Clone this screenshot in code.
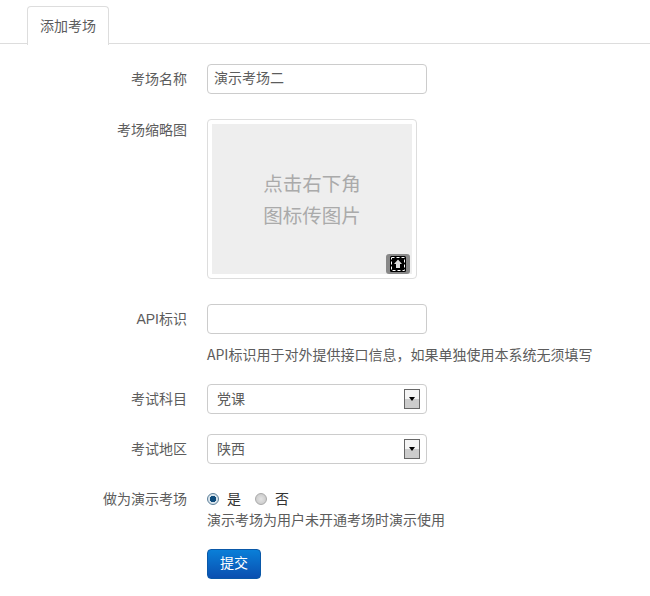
<div class="page">
  <div class="tabs">
    <div class="tab">添加考场</div>
  </div>
  <form class="form">
    <div class="row r-name">
      <div class="label">考场名称</div>
      <div class="input">演示考场二</div>
    </div>
    <div class="row r-thumb">
      <div class="label">考场缩略图</div>
      <div class="thumb">
        <div class="thumb-inner">
          <div class="thumb-text">点击右下角<br />图标传图片</div>
          <div class="upload">
            <svg width="16" height="16" viewBox="0 0 16 16">
              <rect x="0" y="0" width="16" height="16" rx="1.5" fill="#000" />
              <rect x="1.5" y="1.5" width="13" height="13" fill="none" stroke="#fff" stroke-width="1" stroke-dasharray="3 2" />
              <path d="M8 3.5 L12 8 H10 V12 H6 V8 H4 Z" fill="#ddd" />
            </svg>
          </div>
        </div>
      </div>
    </div>
    <div class="row r-api">
      <div class="label api">API标识</div>
      <div class="col">
        <div class="input"></div>
        <div class="help h1">API标识用于对外提供接口信息，如果单独使用本系统无须填写</div>
      </div>
    </div>
    <div class="row r-sel1">
      <div class="label">考试科目</div>
      <div class="select">
        <span>党课</span>
        <span class="arrow"><i></i></span>
      </div>
    </div>
    <div class="row r-sel2">
      <div class="label">考试地区</div>
      <div class="select">
        <span>陕西</span>
        <span class="arrow"><i></i></span>
      </div>
    </div>
    <div class="row r-demo">
      <div class="label">做为演示考场</div>
      <div class="col">
        <div class="radios">
          <span class="radio on"></span><span class="rtext">是</span>
          <span class="radio off"></span><span class="rtext">否</span>
        </div>
        <div class="help h2">演示考场为用户未开通考场时演示使用</div>
      </div>
    </div>
    <div class="row r-btn">
      <div class="label"></div>
      <div class="btn">提交</div>
    </div>
  </form>
</div>

<style>
  :global(body) {
    margin: 0;
    background: #fff;
  }
  .page {
    width: 650px;
    height: 596px;
    overflow: hidden;
    font-family: "Noto Sans CJK SC", "Liberation Sans", sans-serif;
    font-size: 14px;
    color: #5c5c5c;
    padding-top: 6px;
    box-sizing: border-box;
  }
  .tabs {
    height: 37px;
    border-bottom: 1px solid #ddd;
    padding-left: 27px;
  }
  .tab {
    width: 80px;
    height: 38px;
    line-height: 37px;
    text-align: center;
    border: 1px solid #ddd;
    border-bottom: none;
    border-radius: 4px 4px 0 0;
    background: #fff;
  }
  .form {
    display: flex;
    flex-direction: column;
    padding-top: 20px;
  }
  .row {
    display: grid;
    grid-template-columns: 187px 1fr;
    column-gap: 20px;
  }
  .label {
    text-align: right;
    line-height: 30px;
    margin-top: -1px;
  }
  .api {
    font-family: "Liberation Sans", "Noto Sans CJK SC", sans-serif;
    line-height: 16px;
    padding-top: 8px;
  }
  .input {
    width: 220px;
    height: 30px;
    box-sizing: border-box;
    border: 1px solid #ccc;
    border-radius: 4px;
    padding: 0 6px;
    line-height: 25px;
    background: #fff;
  }
  .r-thumb { margin-top: 25px; }
  .r-thumb .label { line-height: 22px; }
  .thumb {
    width: 210px;
    height: 160px;
    box-sizing: border-box;
    border: 1px solid #ddd;
    border-radius: 4px;
    padding: 4px;
  }
  .thumb-inner {
    position: relative;
    width: 200px;
    height: 150px;
    margin: 0 auto;
    background: #eee;
    text-align: center;
  }
  .thumb-text {
    padding-top: 43px;
    font-size: 19.5px;
    line-height: 32px;
    color: #aaa;
  }
  .upload {
    position: absolute;
    right: 2px;
    bottom: 0;
    width: 24px;
    height: 20px;
    background: #888;
    border-radius: 3px;
    display: flex;
    align-items: center;
    justify-content: center;
  }
  .r-api { margin-top: 25px; }
  .h1 {
    margin-top: 10px;
    line-height: 20px;
  }
  .select {
    width: 220px;
    height: 30px;
    box-sizing: border-box;
    border: 1px solid #ccc;
    border-radius: 4px;
    padding: 0 6px 0 9px;
    display: flex;
    align-items: center;
    justify-content: space-between;
  }
  .select > span:first-child {
    line-height: 20px;
    margin-top: -2px;
  }
  .arrow {
    width: 16px;
    height: 20px;
    box-sizing: border-box;
    border: 1px solid #666;
    background: linear-gradient(#f4f4f4 50%, #ccc 50%);
    display: flex;
    align-items: center;
    justify-content: center;
  }
  .arrow i {
    width: 0;
    height: 0;
    border-left: 3.5px solid transparent;
    border-right: 3.5px solid transparent;
    border-top: 4px solid #000;
  }
  .r-sel1 { margin-top: 20px; }
  .r-sel2 { margin-top: 20px; }
  .r-demo { margin-top: 25px; }
  .r-demo .label { line-height: 20px; }
  .radios {
    height: 20px;
    display: flex;
    align-items: center;
    color: #333;
  }
  .radio {
    width: 12px;
    height: 12px;
    border-radius: 50%;
    box-sizing: border-box;
    border: 1px solid #999;
    flex: none;
  }
  .radio.on {
    background: radial-gradient(circle, #0f4c7c 0 3px, #d8e4ec 3.5px);
    border-color: #5d7f99;
  }
  .radio.off {
    background: radial-gradient(circle, #e4e4e4, #c4c4c4);
    border-color: #aaa;
  }
  .rtext {
    margin-left: 8px;
    margin-right: 14px;
    line-height: 20px;
    margin-top: -2px;
  }
  .h2 {
    line-height: 20px;
  }
  .r-btn { margin-top: 20px; }
  .btn {
    width: 54px;
    height: 30px;
    box-sizing: border-box;
    border-radius: 4px;
    background: linear-gradient(#0a7fd8, #0a4fb0);
    border: 1px solid #0a58a8;
    color: #fff;
    text-align: center;
    line-height: 25px;
  }
</style>
